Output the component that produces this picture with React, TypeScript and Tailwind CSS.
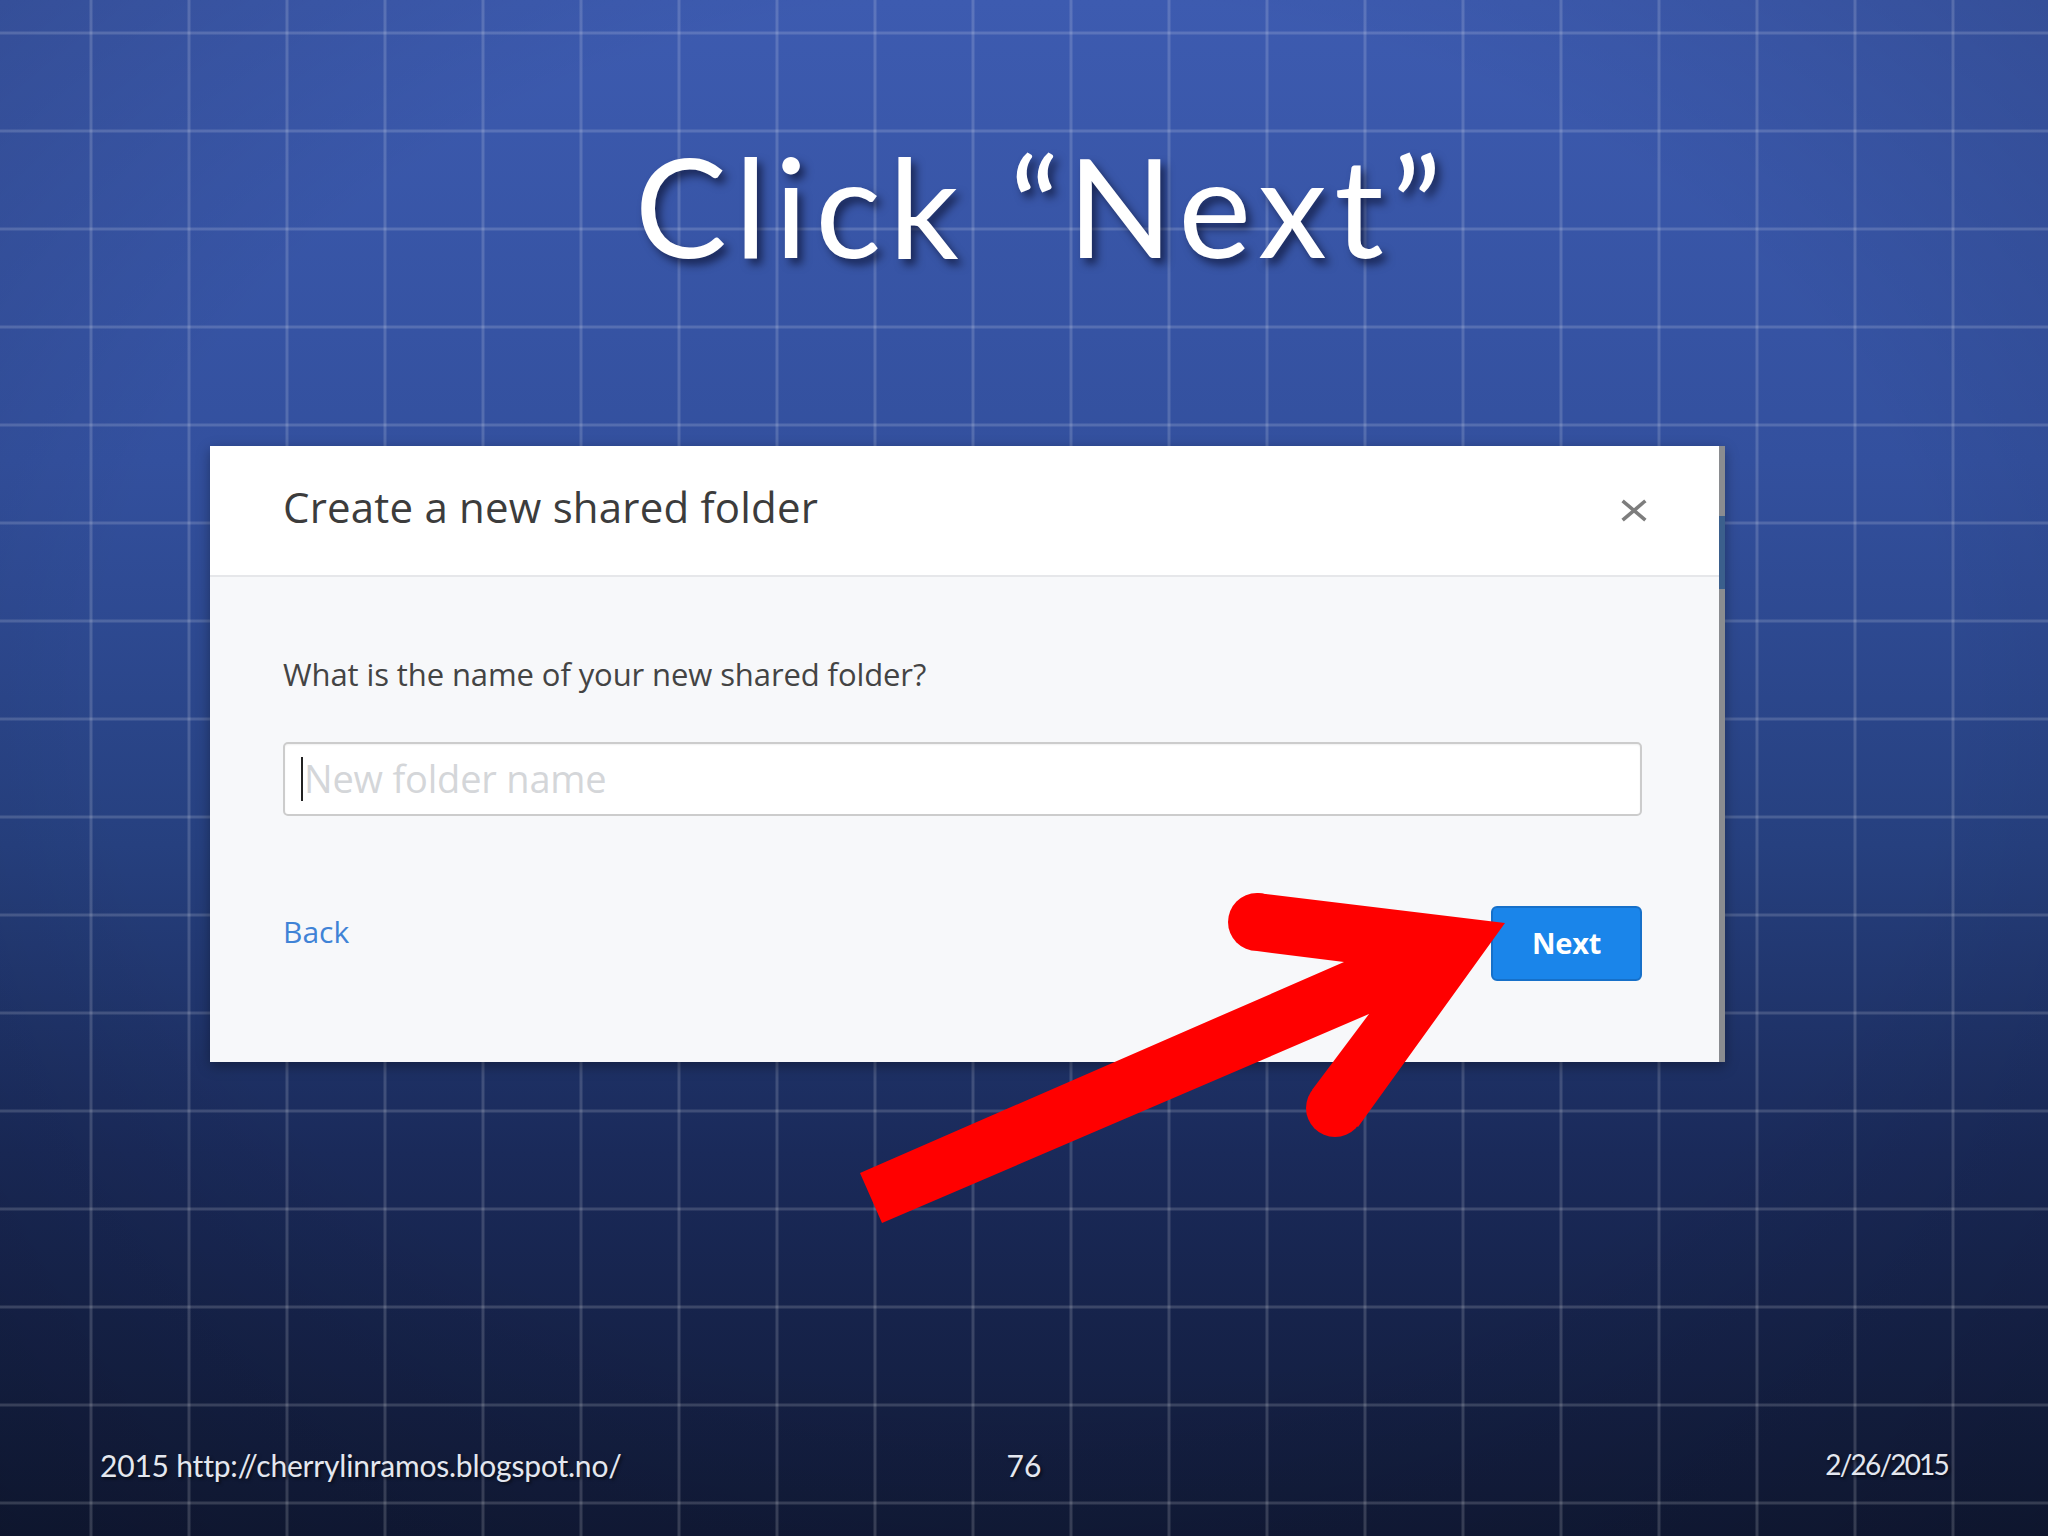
import React from "react";

function Grid() {
  const xs: number[] = [];
  for (let x = -7; x < 2048; x += 98) xs.push(x);
  const ys: number[] = [];
  for (let y = 33; y < 1536; y += 98) ys.push(y);
  return (
    <svg className="absolute inset-0" width="2048" height="1536" viewBox="0 0 2048 1536">
      <defs>
        <linearGradient id="bg" x1="0" y1="0" x2="0" y2="1">
          <stop offset="0" stopColor="#3d5bb0" />
          <stop offset="0.3" stopColor="#33509e" />
          <stop offset="0.55" stopColor="#26407f" />
          <stop offset="0.75" stopColor="#1a2a5a" />
          <stop offset="1" stopColor="#111a37" />
        </linearGradient>
        <radialGradient id="vig" cx="0.5" cy="0.45" r="0.75">
          <stop offset="0.6" stopColor="#000" stopOpacity="0" />
          <stop offset="1" stopColor="#000" stopOpacity="0.18" />
        </radialGradient>
      </defs>
      <rect width="2048" height="1536" fill="url(#bg)" />
      <rect width="2048" height="1536" fill="url(#vig)" />
      <g stroke="#ffffff" strokeOpacity="0.16" strokeWidth="3">
        {xs.map((x) => (
          <line key={"x" + x} x1={x} y1="0" x2={x} y2="1536" />
        ))}
        {ys.map((y) => (
          <line key={"y" + y} x1="0" y1={y} x2="2048" y2={y} />
        ))}
      </g>
    </svg>
  );
}

function Arrow() {
  return (
    <svg className="absolute inset-0 pointer-events-none" width="2048" height="1536" viewBox="0 0 2048 1536">
      <g fill="#ff0000">
        <polygon points="860,1173 1344,962 1257,951 1257,893 1505,923 1358,1127 1312,1090 1369,1014 882,1223" />
        <circle cx="1257" cy="922" r="29" />
        <circle cx="1335" cy="1108" r="29" />
      </g>
    </svg>
  );
}

function CloseIcon() {
  return (
    <svg width="26" height="23" viewBox="0 0 26 23" className="block">
      <g stroke="#7d7d7d" strokeWidth="3.6" strokeLinecap="square">
        <line x1="3" y1="3" x2="23" y2="20" />
        <line x1="23" y1="3" x2="3" y2="20" />
      </g>
    </svg>
  );
}

export default function App() {
  return (
    <div className="relative w-[2048px] h-[1536px] overflow-hidden bg-[#26407f]">
      <Grid />
      <div className="relative flex flex-col h-full">
        <h1 className="pt-[122px] pl-[36px] text-center text-white text-[138px] leading-[1.2] tracking-[7.6px] font-['Lato',sans-serif] [text-shadow:5px_6px_8px_rgba(0,0,20,0.55)]">
          Click “Next”
        </h1>

        <div className="mt-[158px] ml-[210px] w-[1515px] h-[616px] flex shadow-[0_4px_12px_rgba(0,0,0,0.35)] font-['Open_Sans',sans-serif]">
          <div className="flex-1 flex flex-col">
            <div className="h-[131px] bg-white border-b-2 border-[#e6e7ea] flex items-center justify-between pl-[73px] pr-[72px]">
              <div className="text-[42px] text-[#3c3c3c] tracking-[0.2px] -mt-[8px]">Create a new shared folder</div>
              <CloseIcon />
            </div>
            <div className="flex-1 bg-[#f7f8fa] pl-[73px] pr-[77px] pt-[77px]">
              <div className="text-[31px] leading-[40px] text-[#444] tracking-[-0.1px]">
                What is the name of your new shared folder?
              </div>
              <div className="mt-[48px] h-[74px] bg-white border-2 border-[#cccccc] rounded-[5px] flex items-center pl-[16px] shadow-[inset_0_1px_2px_rgba(0,0,0,0.06)]">
                <span className="w-[2px] h-[44px] bg-[#222]" />
                <span className="ml-[1px] text-[38px] text-[#d4d6d9] tracking-[-0.2px]">New folder name</span>
              </div>
              <div className="mt-[90px] flex items-center justify-between">
                <span className="text-[30px] text-[#3f83d6] -mt-[24px]">Back</span>
                <button className="w-[151px] h-[75px] rounded-[6px] bg-[#1a85ea] border-2 border-[#1670c9] text-white font-bold text-[29px] tracking-[-0.3px]">
                  Next
                </button>
              </div>
            </div>
          </div>
          <div className="w-[6px] flex flex-col bg-[#8a8c90]">
            <div className="h-[70px]" />
            <div className="h-[73px] bg-[#3b5f8c]" />
          </div>
        </div>

        <div className="mt-auto mb-[48px] grid grid-cols-3 px-[100px] text-[#e4e7ef] font-['Lato',sans-serif] [text-shadow:2px_2px_3px_rgba(0,0,0,0.5)]">
          <div className="text-left text-[30px] tracking-[-0.2px]">2015 http://cherrylinramos.blogspot.no/</div>
          <div className="text-center text-[30px]">76</div>
          <div className="text-right text-[28px] tracking-[-1.8px]">2/26/2015</div>
        </div>
      </div>
      <Arrow />
    </div>
  );
}
